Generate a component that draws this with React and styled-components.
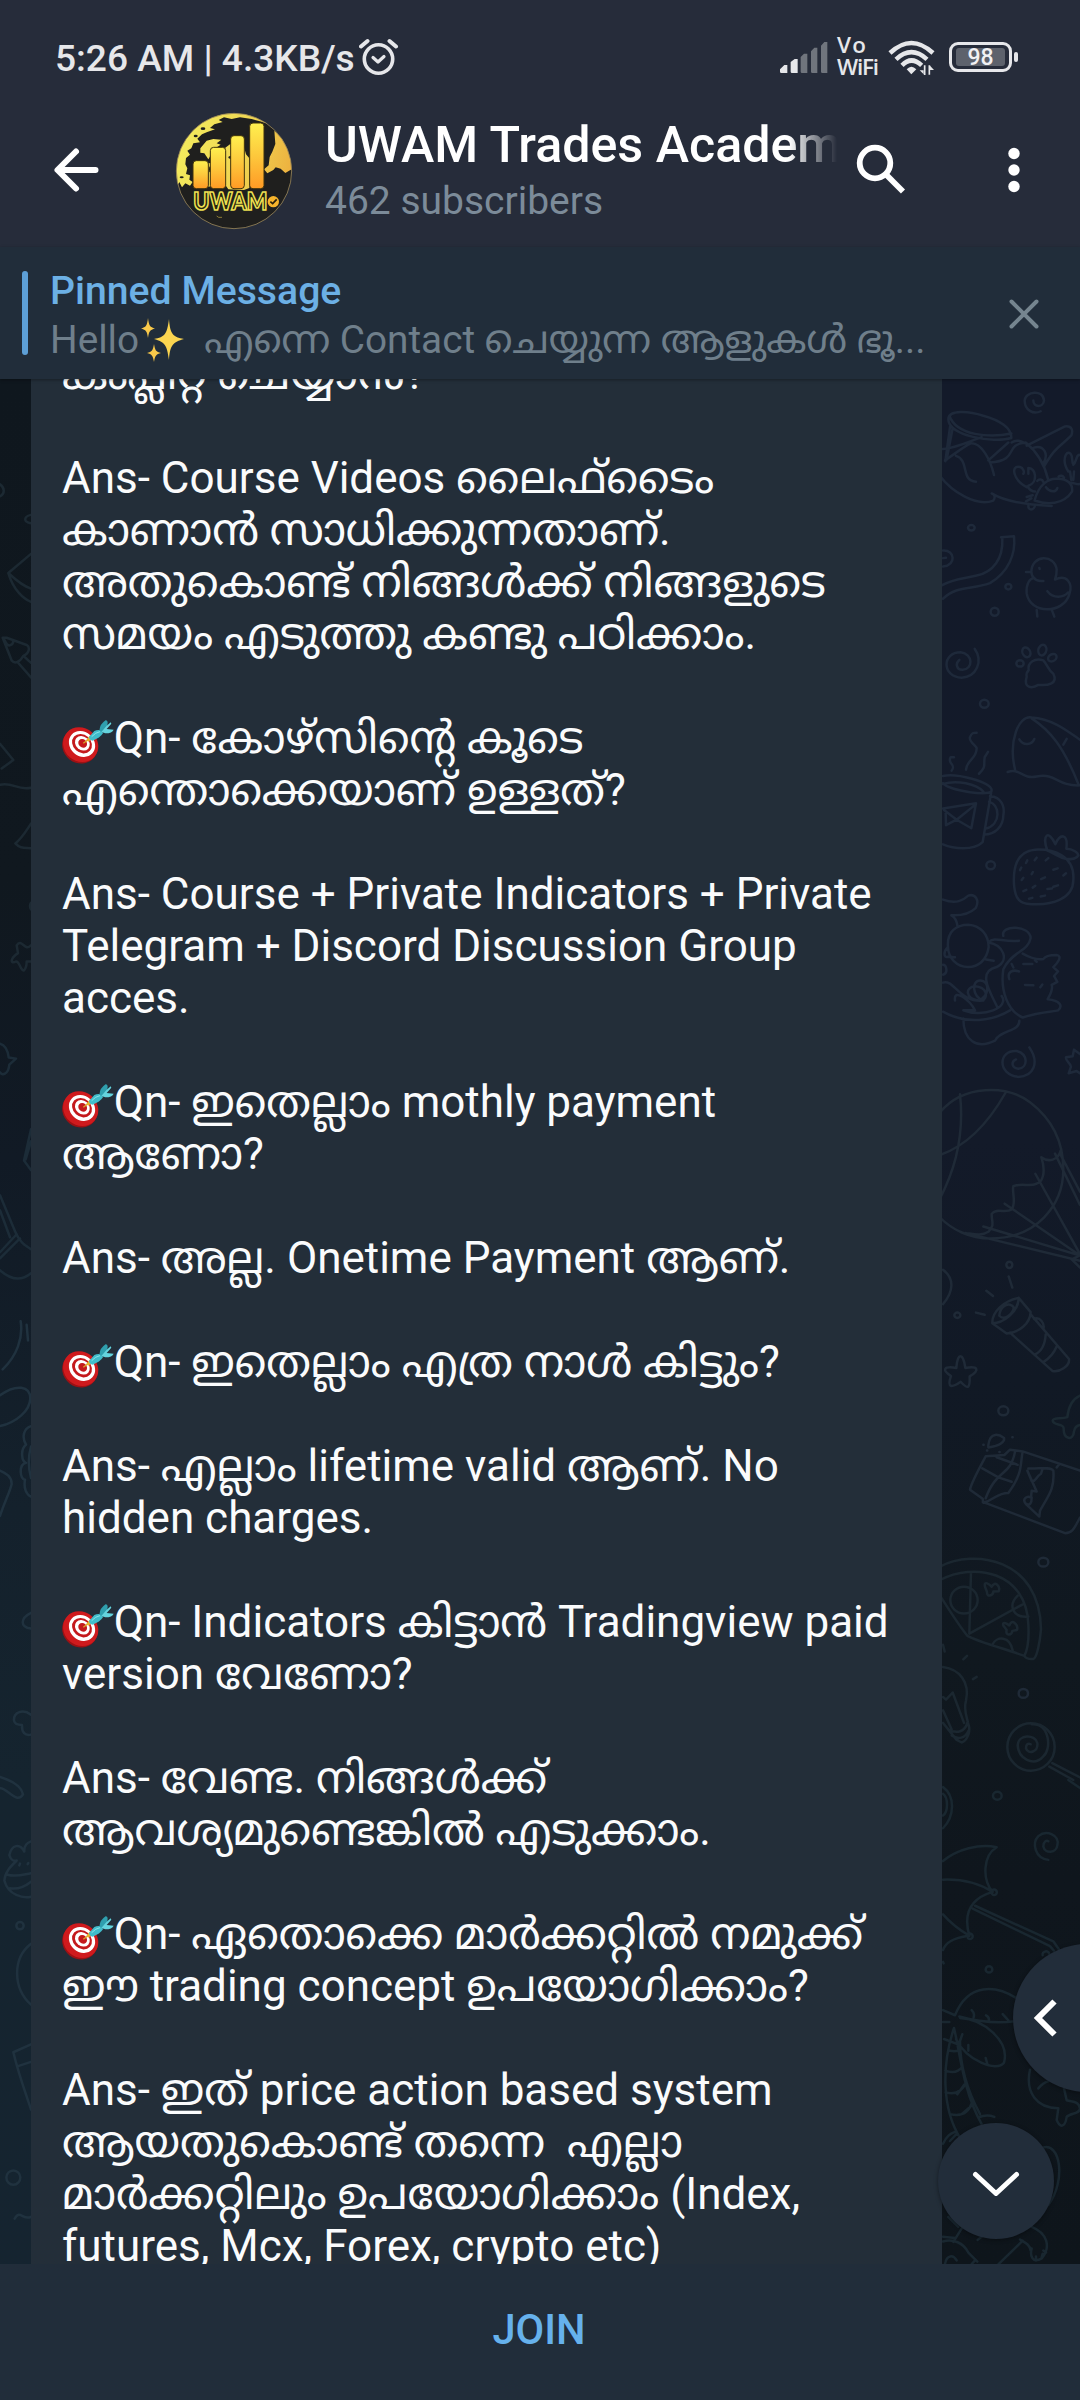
import React from "react";
import styled, { createGlobalStyle } from "styled-components";

const GlobalStyle = createGlobalStyle`
  body {
    margin: 0;
    background: #222d3a;
    font-family: Roboto, "Noto Sans Malayalam", sans-serif;
  }
`;

const Screen = styled.div`
  display: flex;
  flex-direction: column;
  width: 1080px;
  height: 2400px;
  overflow: hidden;
  color: #fff;
`;

const Top = styled.header`
  display: flex;
  flex-direction: column;
  height: 247px;
  background: #262c3a;
`;

const StatusBar = styled.div`
  display: flex;
  align-items: flex-start;
  height: 102px;
  padding: 0 62px 0 55px;
  box-sizing: border-box;
`;

const Clock = styled.span`
  margin-top: 37px;
  width: 304px;
  font-size: 37.1px;
  line-height: 44px;
  font-weight: 500;
  white-space: pre;
  color: #e6e7ea;
`;

const AlarmIcon = styled.svg`
  width: 40px;
  height: 38px;
  margin-top: 38px;
`;

const Spacer = styled.div`
  flex: 1;
`;

const SignalIcon = styled.svg`
  width: 48px;
  height: 31px;
  margin: 42px 9px 0 0;
`;

const Carrier = styled.div`
  display: flex;
  flex-direction: column;
  width: 51px;
  margin-top: 34px;
  font: 600 22.4px/21.5px "Open Sans", sans-serif;
  color: #e6e7ea;
`;

const CarrierLine = styled.span`
  letter-spacing: ${(p) => p.$track}px;
`;

const WifiIcon = styled.svg`
  width: 47px;
  height: 36px;
  margin: 40px 14px 0 0;
`;

const Battery = styled.div`
  display: flex;
  align-items: center;
  margin-top: 42px;
`;

const BatteryShell = styled.div`
  display: flex;
  width: 63px;
  height: 30px;
  box-sizing: border-box;
  padding: 3px 4px;
  border: 3px solid #e6e7ea;
  border-radius: 9px;
`;

const BatteryLevel = styled.div`
  flex: 1;
  border-radius: 3px;
  background: #5d626c;
  font-size: 23px;
  font-weight: 500;
  line-height: 20px;
  text-align: center;
  color: #f1f1f3;
`;

const BatteryTip = styled.div`
  width: 4px;
  height: 10px;
  margin-left: 2px;
  border-radius: 2px;
  background: #e6e7ea;
`;

const TitleBar = styled.div`
  display: flex;
  align-items: center;
  height: 136px;
  padding-left: 53px;
`;

const BackIcon = styled.svg`
  width: 46px;
  height: 46px;
`;

const Avatar = styled.svg`
  width: 118px;
  height: 118px;
  margin: 1px 0 0 76px;
`;

const Titles = styled.div`
  display: flex;
  flex-direction: column;
  width: 513px;
  margin: -3px 0 0 32px;
`;

const ChannelName = styled.div`
  height: 58px;
  overflow: hidden;
  font-size: 50.2px;
  line-height: 58px;
  font-weight: 500;
  white-space: nowrap;
  -webkit-mask-image: linear-gradient(90deg, #000 464px, transparent 512px);
  mask-image: linear-gradient(90deg, #000 464px, transparent 512px);
`;

const Subscribers = styled.div`
  height: 46px;
  margin: 4px 0 -2px;
  font-size: 39px;
  line-height: 46px;
  color: #7c8b99;
`;

const SearchIcon = styled.svg`
  width: 50px;
  height: 52px;
  margin-left: 17px;
`;

const MoreIcon = styled.svg`
  width: 14px;
  height: 48px;
  margin-left: 102px;
`;

const Pinned = styled.section`
  display: flex;
  align-items: flex-start;
  height: 132px;
  padding: 24px 40px 0 22px;
  box-sizing: border-box;
  background: #212d3a;
  box-shadow: 0 1px 3px rgba(0, 0, 0, 0.35);
  z-index: 1;
`;

const PinnedBar = styled.div`
  width: 6px;
  height: 84px;
  border-radius: 3px;
  background: #5d9fd6;
`;

const PinnedBody = styled.div`
  flex: 1;
  margin: -3px 0 0 22px;
`;

const PinnedTitle = styled.div`
  font-size: 39.2px;
  font-weight: 500;
  line-height: 46px;
  color: #6cb0e5;
`;

const PinnedText = styled.div`
  display: flex;
  align-items: center;
  margin-top: 2px;
  height: 48px;
  font-size: 38.75px;
  line-height: 48px;
  white-space: pre;
  color: #6f7f8b;
`;

const SparkleIcon = styled.svg`
  width: 46px;
  height: 44px;
`;

const CloseIcon = styled.svg`
  width: 32px;
  height: 32px;
  margin-top: 27px;
`;

const Chat = styled.main`
  position: relative;
  display: flex;
  height: 1885px;
  overflow: hidden;
  background:
    linear-gradient(180deg, #0f171e 0, #10181f 500px, #111a25 780px, #14212c 1130px, #15242f 1400px, #152430 100%) 0 0 / 31px 100% no-repeat,
    linear-gradient(180deg, #131a2a 0, #131a29 760px, #111925 1000px, #10181f 1280px, #0f161d 1500px, #0e151b 100%);
`;

const Doodles = styled.svg`
  position: absolute;
  inset: 0;
  width: 1080px;
  height: 1885px;
  fill: none;
  stroke-width: 2.5;
  stroke-linecap: round;
  stroke-linejoin: round;

  path,
  ellipse {
    vector-effect: non-scaling-stroke;
  }
`;

const Bubble = styled.article`
  position: relative;
  width: 911px;
  margin-left: 31px;
  padding-left: 31px;
  box-sizing: border-box;
  background: #232e39;
`;

const Lines = styled.div`
  display: flex;
  flex-direction: column;
  margin-top: -31px;
`;

const Line = styled.div`
  height: 52px;
  flex: none;
  font-size: 44px;
  line-height: 52px;
  white-space: pre;
  color: #fafbfc;
`;

const DartIcon = styled.svg`
  display: inline-block;
  width: 53px;
  height: 44.67px;
  margin-right: -1.3px;
  vertical-align: -10.7px;
`;

const RoundButton = styled.button`
  position: absolute;
  display: flex;
  align-items: center;
  left: ${(p) => p.$x}px;
  top: ${(p) => p.$y}px;
  width: ${(p) => p.$size}px;
  height: ${(p) => p.$size}px;
  padding: 0 0 0 ${(p) => p.$inset}px;
  border: 0;
  border-radius: 50%;
  background: #222d3a;
  box-shadow: 0 1px 4px rgba(0, 0, 0, 0.4);
`;

const JoinBar = styled.footer`
  display: flex;
  justify-content: center;
  height: 136px;
  background: #212d3a;
`;

const JoinButton = styled.button`
  height: 48px;
  margin: 42px 2px 0 0;
  padding: 0;
  border: 0;
  background: none;
  font: 500 41.6px/48px Roboto, sans-serif;
  color: #66b1ec;
`;

const Dart = () => (
  <DartIcon viewBox="186 58 159 134">
    <ellipse cx="240" cy="139" rx="55" ry="51" transform="rotate(38 240 139)" fill="#9c1114" />
    <ellipse cx="242" cy="135" rx="55" ry="50" transform="rotate(42 242 135)" fill="#cf1a1d" />
    <ellipse cx="246" cy="133" rx="42" ry="36" transform="rotate(42 246 133)" fill="#fff" />
    <ellipse cx="246" cy="132" rx="32" ry="27" transform="rotate(42 246 132)" fill="#c4191c" />
    <ellipse cx="247" cy="131" rx="24" ry="20" transform="rotate(42 247 131)" fill="#fff" />
    <ellipse cx="248" cy="131" rx="14" ry="12" transform="rotate(42 248 131)" fill="#c4191c" />
    <path d="M250 131 L268 117" stroke="#d9a425" strokeWidth="4" />
    <path d="M259 121 L270 107 L279 115 L265 126Z" fill="#e8b32d" />
    <path d="M267 112 L283 94 Q292 90 303 92 L309 101 Q300 115 278 123 Q268 122 267 112Z" fill="#41bccb" />
    <path d="M298 93 Q299 73 318 61 L323 66 L322 81 L308 98Z" fill="#2f9fae" />
    <path d="M304 97 Q318 79 332 68 L334 72 L320 88 L341 90 Q337 101 316 101Z" fill="#64d3dd" />
    <path d="M275 111 Q287 98 300 96" stroke="#8be6ea" strokeWidth="3" fill="none" />
  </DartIcon>
);

const Sparkles = () => (
  <SparkleIcon viewBox="0 0 46 44">
    <path d="M30 1 C31 16 34 19 45 21 C34 24 31 27 30 42 C28 27 26 24 15 21 C26 19 28 16 30 1Z" fill="#fbd550" />
    <path d="M9 0 C10 8 11 9 16 10.500 C11 12 10 13 9 20 C8 13 7 12 2 10.500 C7 9 8 8 9 0Z" fill="#f9c94a" />
    <path d="M15 26 C16 32 17 34 22 35 C17 36 16 38 15 44 C14 38 13 36 8 35 C13 34 14 32 15 26Z" fill="#f9c94a" />
  </SparkleIcon>
);

const Logo = () => (
  <Avatar viewBox="45 36 354 354">
    <defs>
      <linearGradient id="bar" x1="0" y1="0" x2="0" y2="1">
        <stop offset="0" stopColor="#fff04f" />
        <stop offset="0.5" stopColor="#fdc83c" />
        <stop offset="1" stopColor="#ff9a25" />
      </linearGradient>
      <linearGradient id="land" gradientUnits="userSpaceOnUse" x1="48" y1="100" x2="396" y2="200">
        <stop offset="0" stopColor="#f3ec5e" />
        <stop offset="0.6" stopColor="#efd552" />
        <stop offset="1" stopColor="#edb13f" />
      </linearGradient>
      <clipPath id="disc">
        <circle cx="222" cy="213" r="173" />
      </clipPath>
    </defs>
    <circle cx="222" cy="213" r="173" fill="#1f1f1e" />
    <g clipPath="url(#disc)" fill="url(#land)">
      <path d="M46 270 L40 170 L120 60 L200 36 L290 45 L325 72 L300 64 L275 57 L240 52 L215 57 L192 52 L176 60 L188 66 L163 73 L150 84 L165 88 L140 97 L126 103 L112 116 L120 127 L100 130 L94 145 L82 152 L90 164 L78 174 L76 193 L82 205 L78 222 L90 226 L88 239 L98 246 L90 257 L76 250 L66 262 L58 246Z" />
      <path d="M121 145 L140 122 L160 117 L184 119 L170 130 L182 134 L166 145 L178 152 L154 163 L145 178 L133 160 L121 158Z" />
      <path d="M196 143 L211 132 L250 134 L258 163 L268 175 L268 264 L252 270 L205 268 L194 252 L145 260 L145 190 L194 185Z" />
      <path d="M343 92 L380 130 L404 200 L395 208 L376 219 L362 206 L347 202 L340 210 L322 220 L312 208 L326 196 L329 171 L337 155 L346 132Z" />
    </g>
    <g fill="#1f1f1e">
      <ellipse cx="129" cy="86" rx="7" ry="4" />
      <ellipse cx="107" cy="108" rx="6" ry="4" />
      <ellipse cx="215" cy="172" rx="10" ry="5" />
      <ellipse cx="150" cy="208" rx="3" ry="9" />
      <ellipse cx="65" cy="232" rx="6" ry="3" />
    </g>
    <g fill="url(#bar)" stroke="#40330c" strokeWidth="3">
      <rect x="99" y="182" width="46" height="84" rx="10" />
      <rect x="151" y="142" width="46" height="124" rx="10" />
      <rect x="212" y="107" width="41" height="159" rx="10" />
      <rect x="269" y="69" width="43" height="197" rx="10" />
    </g>
    <path d="M170 348 L176 352 L186 352" stroke="#c3a844" strokeWidth="2" fill="none" />
    <text x="100" y="331" textLength="222" lengthAdjust="spacingAndGlyphs" fontFamily="Lato, sans-serif" fontWeight="900" fontSize="74" fill="#25240f" stroke="#eee052" strokeWidth="5">UWAM</text>
    <circle cx="340" cy="305" r="17" fill="#f8b52c" />
    <path d="M331 305 L338 311 L350 298" stroke="#2b210b" strokeWidth="5" fill="none" />
    <circle cx="222" cy="213" r="173" fill="none" stroke="#97855a" strokeWidth="2.500" />
  </Avatar>
);

const Wallpaper = () => (
  <Doodles viewBox="0 379 1080 1885">
    <g transform="translate(940 380) scale(0.33333 0.44643)" stroke="#1e293a">
      <path d="M302 70 C280 78 254 68 254 46 C256 25 310 20 312 46 C310 62 280 62 280 46" />
      <path d="M25 88 C25 65 90 70 130 80 C180 90 215 108 214 130 C160 142 25 125 25 88Z M28 80 C50 125 150 130 214 120 M30 105 L16 182 M38 108 L20 178 M0 215 C35 250 110 285 160 270 C168 262 162 255 155 254 C200 275 270 280 335 282" />
      <path d="M0 155 C40 155 80 140 125 128 M15 180 C45 165 70 150 92 142 C125 140 152 180 162 213 M48 170 C90 180 60 225 108 228 M145 180 L205 140 M150 185 C240 180 190 145 257 140 C290 160 312 185 324 222 M215 140 C230 132 245 138 257 142 M260 147 L375 104 C395 102 400 112 394 124 C360 150 345 150 312 194 M280 152 C310 144 328 165 310 187" />
      <path d="M260 240 C220 225 210 190 240 195 C250 197 254 207 250 210 M265 237 C295 230 288 196 265 197 L265 210 M262 238 C268 245 275 250 285 250 M284 270 C295 235 325 220 350 221 C380 220 400 232 396 250 C370 280 320 280 284 270Z M260 262 L278 258 M258 272 L274 265 M266 278 C260 295 285 292 285 280 M318 240 C330 252 348 252 352 242 M292 226 a10 7 0 0 1 18 2 M356 216 a10 7 0 0 1 16 3 M390 230 C405 230 410 235 420 233 M385 205 C360 175 385 150 395 170 L398 186 M400 190 C410 185 408 165 420 168 M390 205 L394 224 M402 205 L400 224" />
      <ellipse cx="94" cy="331" rx="10" ry="6" />
      <ellipse cx="205" cy="463" rx="9" ry="6" />
      <ellipse cx="164" cy="519" rx="12" ry="9" />
      <ellipse cx="133" cy="725" rx="13" ry="9" />
      <ellipse cx="152" cy="1087" rx="13" ry="9" />
      <path d="M183 352 L222 350 C228 390 205 430 150 455 C95 470 50 460 9 490 M187 355 C190 400 160 430 110 438 C70 445 40 445 5 460 M9 382 C45 380 50 415 9 418 M9 399 L18 398" />
      <path d="M258 430 L274 430 C275 390 345 390 350 425 C350 440 345 445 345 447 C380 435 400 455 388 480 C370 525 270 525 260 478 C258 455 270 445 282 443 C290 452 300 450 310 450 M282 443 Q275 440 274 430 M322 473 C340 490 370 488 384 476 M290 515 L292 530 M336 516 L343 530 M298 421 L299 423" />
      <path d="M104 602 C130 630 110 665 65 667 C5 665 5 610 62 610 C100 613 100 648 68 649 C50 650 45 635 58 627" />
      <path d="M260 665 C250 690 275 692 295 683 C325 685 355 680 340 658 C325 650 322 638 310 628 C285 622 262 632 266 650 Q258 655 260 665Z" />
      <ellipse cx="240" cy="635" rx="11" ry="7" />
      <ellipse cx="259" cy="610" rx="13" ry="10" transform="rotate(30 259 610)" />
      <ellipse cx="307" cy="605" rx="13" ry="11" transform="rotate(-40 307 605)" />
      <ellipse cx="337" cy="622" rx="13" ry="8" transform="rotate(-15 337 622)" />
      <path d="M203 878 C240 868 245 895 290 888 C350 880 350 910 420 908 M225 872 C205 810 235 750 275 756 C340 760 380 785 420 806 M275 758 C330 785 370 820 415 905 M238 805 C250 820 275 818 283 804 M370 817 L380 804" />
      <path d="M35 875 C50 860 20 860 32 845 L42 845 M78 873 C80 850 110 850 110 825 C110 820 85 810 90 800 C95 790 100 790 110 790 M117 882 C140 865 130 865 134 845 L144 833" />
      <path d="M9 887 C50 880 150 900 155 918 C160 935 25 920 9 903 M9 905 C50 895 110 905 130 922 M155 918 L128 1035 C100 1055 40 1050 9 1040 M150 932 C185 935 195 955 190 975 C190 1000 165 1018 133 1018 M147 945 C180 950 185 995 137 1005 M9 960 L108 948 L94 1004 L50 985 L18 997 L17 970 M12 963 L50 985 L108 950" />
      <path d="M222 1130 C218 1080 240 1055 285 1052 C340 1050 405 1065 400 1120 C400 1160 340 1180 260 1173 C230 1170 224 1150 222 1130Z M322 1054 C305 1020 325 1005 346 1040 C360 1015 385 1015 379 1050 C400 1050 415 1060 415 1065 C405 1075 390 1075 365 1070 C345 1062 335 1058 322 1054" />
      <path d="M240 1098 l4 -6 M258 1082 l4 -6 M284 1076 l6 -6 M317 1076 l8 -5 M340 1097 l13 -3 M370 1110 l8 -5 M245 1120 l5 -5 M275 1107 l4 -5 M303 1118 l12 -4 M340 1135 l14 -3 M250 1145 l9 -3 M278 1137 l8 -4 M267 1162 l10 -2 M302 1157 l13 -2 M322 1140 l14 -1" />
      <path d="M9 1164 C50 1175 70 1165 85 1155 C105 1150 120 1165 107 1183 C90 1195 60 1200 34 1199 Q50 1205 53 1225 M24 1270 C20 1235 50 1220 85 1220 C120 1222 145 1240 146 1270 C140 1300 115 1315 84 1315 C50 1315 25 1295 24 1270Z M24 1270 C10 1280 10 1295 24 1292 L45 1293 M145 1260 C165 1245 185 1260 237 1256 M138 1298 L161 1301 M9 1310 C20 1310 25 1330 9 1332 M190 1245 C180 1220 270 1220 272 1250 C265 1280 215 1280 190 1320 C180 1370 205 1415 248 1428 C300 1415 340 1415 354 1412 C370 1402 360 1390 323 1387 Q340 1365 335 1355 L352 1348 L342 1335 L354 1325 L340 1315 C350 1308 370 1290 350 1288 C330 1288 315 1290 310 1297 C290 1300 260 1290 248 1285" />
      <path d="M145 1260 C190 1265 210 1300 170 1315 C110 1325 150 1370 172 1405 M9 1350 C40 1340 60 1395 128 1390 C145 1380 140 1360 105 1358 C75 1360 75 1385 115 1390 C150 1380 150 1345 120 1345 C95 1345 95 1380 130 1390 M9 1415 C80 1445 160 1435 210 1412 M45 1390 C40 1360 90 1390 105 1412 L70 1412 C130 1430 210 1405 185 1380 M70 1430 C70 1480 110 1500 165 1480 C180 1455 240 1460 238 1435 M208 1342 C200 1325 220 1320 237 1325 M215 1308 L220 1316 M250 1308 L277 1308 M285 1300 L290 1303 M255 1355 L280 1356 M301 1360 L307 1354" />
      <path d="M268 1495 C300 1530 280 1560 235 1561 C170 1555 175 1500 230 1503 C265 1510 265 1540 235 1543 C215 1540 212 1528 228 1522 M420 1510 L402 1500 L398 1515 L378 1517 C375 1525 392 1530 393 1538 L386 1553 L410 1548 L425 1555" />
    </g>
    <g transform="translate(940 1080) scale(0.33333 0.44643)" stroke="#1f2a37">
      <path d="M0 72 C70 10 200 10 270 50 C340 90 370 140 370 200 C370 280 290 355 150 355 C90 355 35 335 0 308 M0 168 C90 145 150 90 197 28 M60 32 C70 100 60 180 0 265 M304 173 C320 210 305 230 290 232 C270 240 245 230 220 238 C215 250 230 275 215 290 C195 300 170 285 155 300 C155 320 165 325 145 340 C125 350 100 345 78 343 M304 173 C325 185 355 180 362 158 M78 343 L420 405 M130 328 L420 393 M194 277 L420 393 M286 210 L420 390 M345 165 L420 280 M360 165 L420 250 M395 402 L420 393 M395 402 L420 420" />
      <ellipse cx="208" cy="414" rx="9" ry="7" />
      <ellipse cx="52" cy="527" rx="9" ry="6" />
      <ellipse cx="190" cy="741" rx="15" ry="10" />
      <ellipse cx="310" cy="1080" rx="15" ry="10" />
      <ellipse cx="250" cy="1374" rx="14" ry="10" />
      <path d="M9 425 C45 445 40 475 9 502 M206 440 L217 465 M139 472 L159 484 M108 521 L134 526 M157 545 L200 568 C240 565 270 545 272 520 L236 488 C190 495 155 520 157 545Z M178 528 C180 505 210 495 222 510 C215 530 190 538 178 528 M157 545 C190 545 235 520 236 488 M272 525 L387 625 C390 640 360 655 338 652 L210 566 M282 535 C300 530 315 545 310 558 M317 570 C315 595 300 610 283 615 M350 597 C340 615 325 625 310 632" />
      <path d="M49 645 C52 610 70 610 76 645 C115 640 120 650 89 664 C90 690 85 695 62 676 C35 690 20 690 33 663 C5 650 10 640 49 645Z" />
      <path d="M420 707 C395 715 385 735 382 755 C365 760 340 755 338 763 C340 775 370 768 371 780 C370 805 400 810 402 787 Q405 775 420 773" stroke="#1b2932" />
      <path d="M145 818 C150 785 180 795 192 802 C195 810 180 820 145 823Z M130 817 l1 0 M217 800 l1 0 M141 830 l1 0 M178 833 l1 0 M137 843 L193 840 L210 828 L248 832 C240 860 250 880 205 925 C170 925 165 940 130 947 L128 938 L90 918 Q92 905 137 843Z M127 870 L175 890 L215 900 M170 845 L233 862 M137 937 C170 870 210 890 225 833 M248 832 L420 875 M128 945 L375 1015 C400 1015 405 1000 420 980 M265 870 C290 872 330 865 340 875 C345 920 320 935 300 965 L298 978 L265 955 C240 940 260 930 273 935 L275 920 L290 922 L262 875 L275 898 C290 900 285 890 303 882 L308 870 M350 868 L358 860 M260 950 Q275 955 275 935" />
      <g stroke="#1b2730">
        <path d="M0 1090 C100 1050 300 1070 303 1230 C300 1260 290 1295 280 1297 C265 1298 258 1296 253 1290 C200 1275 120 1260 82 1245 C55 1220 30 1190 0 1155 M0 1120 C100 1080 260 1100 265 1220 C268 1260 260 1280 253 1290 M93 1102 L88 1240 M88 1240 L247 1175" />
        <ellipse cx="72" cy="1165" rx="41" ry="30" />
        <path d="M135 1135 C130 1120 150 1130 155 1135 C165 1120 182 1135 176 1145 L160 1146 C160 1155 140 1160 141 1147Z M190 1222 C185 1210 205 1220 208 1222 C215 1205 236 1220 231 1232 L217 1234 C215 1245 195 1245 200 1232Z M233 1155 C205 1175 215 1205 265 1202 M157 1265 C170 1245 210 1245 218 1278 M9 1265 L14 1280 M70 1298 L81 1290 M99 1342 L110 1337" />
        <path d="M9 1315 C60 1320 90 1350 78 1390 C70 1410 80 1425 84 1440 C95 1460 80 1480 65 1484 L50 1478 C35 1465 15 1445 9 1440 M25 1455 C50 1465 75 1460 82 1440 M35 1468 C55 1478 75 1475 85 1458 M9 1382 L18 1388 L38 1372 L72 1440 M9 1412 L35 1455" />
        <ellipse cx="273" cy="1494" rx="71" ry="53" />
        <path d="M337 1530 L420 1562 M328 1538 L400 1568 M275 1443 C330 1440 335 1500 310 1515 C280 1540 235 1520 233 1490 C235 1465 285 1465 292 1485 C295 1505 265 1512 258 1497 C258 1487 265 1485 272 1488" />
      </g>
    </g>
    <g transform="translate(900 1780) scale(0.33333 0.39541)" stroke="#192730">
      <path d="M129 18 C165 40 165 90 129 122 M129 35 C145 45 145 80 129 90 M505 0 L540 20" />
      <ellipse cx="292" cy="40" rx="13" ry="10" />
      <ellipse cx="267" cy="479" rx="10" ry="8" />
      <path d="M445 202 C405 198 395 160 415 142 C440 125 480 140 472 165 C470 185 435 188 430 168 C430 155 440 152 445 155" />
      <path d="M129 205 C170 175 240 160 290 170 C250 190 245 250 278 283 C210 300 190 340 208 394 C150 400 135 415 129 430 M129 252 C190 250 235 260 278 283 M129 340 C160 370 190 385 208 394 M276 280 a8 7 0 1 1 0 8 M202 395 a8 7 0 1 1 2 5 M225 318 L460 408 L478 430 M218 325 L450 420 L462 432 M428 443 a10 8 0 0 1 20 -3 M129 460 l2 4" />
      <path d="M129 582 L165 595 C205 510 290 520 350 552 M178 598 C250 615 300 615 345 610 M215 582 Q225 590 221 600 M258 595 Q270 600 266 612 M308 592 L325 608 M180 602 C250 605 330 660 312 715 C290 740 200 710 168 655 M205 670 L205 685 M257 703 L262 718 M187 643 L180 660 M132 655 L178 670 M129 612 L148 612 M162 627 C125 720 125 830 180 905 M162 627 C180 690 190 790 245 870 M180 660 C180 730 205 790 240 845 M150 685 Q175 688 182 680 M136 735 Q170 745 187 725 M137 790 Q180 800 198 765 M150 845 Q200 855 215 818 M172 795 L193 770 M185 845 L217 822 M236 853 Q260 845 283 852 M129 920 C140 900 150 895 165 890 M150 913 L170 895" />
      <path d="M390 733 C375 790 410 830 475 830 L470 860 C480 880 495 880 500 852 C510 842 540 845 540 830 C535 810 515 815 500 810 L492 780 M415 780 Q430 765 445 762 M428 930 C480 915 500 1010 445 1075 M395 1130 C440 1145 455 1180 425 1210 C395 1225 390 1200 395 1185 M368 1165 L295 1225 M360 1162 C375 1170 390 1175 392 1190 M408 1215 L408 1205 M425 1207 L428 1198 M438 1195 L430 1190 M129 1155 L165 1158 M129 1167 C160 1160 190 1170 205 1195 L232 1218 M145 1105 L175 1130 M188 1130 L160 1168 M215 1224 L225 1215 M233 1163 L245 1155 M135 1224 C140 1200 160 1200 170 1215" />
    </g>
    <g transform="translate(0 380) scale(0.33333 0.59949)" stroke="#1c2932">
      <path d="M0 174 C15 180 15 190 0 194 M93 225 C70 228 70 237 93 239 M93 290 L25 322 C40 350 70 365 93 370 M25 322 C50 335 75 345 93 348 M8 430 L35 468 C45 475 60 470 70 460 C90 455 90 445 80 442 L20 430Z M14 434 C25 450 40 440 40 435 M70 460 L93 472 M55 472 L93 496 M0 607 L40 634 L5 648 M0 675 C40 670 50 685 93 680 M93 740 C75 755 65 765 46 773 C60 782 75 780 93 781 M93 872 Q87 877 93 883 M93 943 C75 955 65 930 50 943 L54 956 C30 965 30 975 48 970 C60 970 60 985 72 985 Q80 980 80 970 L93 970" />
      <path d="M0 1107 C20 1110 25 1125 26 1130 L48 1132 L28 1142 C25 1160 5 1160 0 1155 M93 1250 L72 1302 L93 1318 M77 1300 L93 1270 M0 1360 L45 1420 C60 1440 80 1445 93 1450 M0 1385 L30 1430 M0 1455 L50 1425 M0 1465 L60 1432 M0 1485 C30 1500 60 1505 93 1490" stroke="#1c2c38" />
    </g>
    <g transform="translate(0 1320) scale(0.33333 0.60268)" stroke="#20323f">
      <path d="M62 2 C70 30 50 60 8 82 M80 8 L84 34 M0 125 C50 105 90 110 91 130 C90 150 50 170 0 176 M93 176 C70 180 65 195 78 207 C60 215 65 235 78 237 C55 240 60 265 75 265 C70 280 80 290 93 293 M93 210 Q80 235 93 262 M0 250 C20 255 35 260 35 272 C30 285 15 300 0 325 M93 486 C60 495 60 510 93 512 M93 655 C70 645 40 650 42 665 C45 672 60 672 66 672 C65 685 75 690 93 688 M0 758 C40 765 65 775 69 787 C50 805 20 775 0 777" />
      <path d="M93 865 C78 868 72 875 73 882 C60 868 35 870 28 888 C35 900 45 897 50 897 C35 905 15 915 13 930 C25 955 70 960 93 957 M20 920 C50 925 70 920 93 918 M30 943 C55 945 75 940 93 932 M58 905 l2 -3 M83 903 l2 -2 M93 1035 C35 1060 40 1110 93 1136 M93 1202 L40 1215 C55 1250 75 1280 93 1310 M54 1238 L93 1231 M44 1491 C60 1475 70 1495 93 1488" />
      <ellipse cx="60" cy="1005" rx="11" ry="6" />
      <ellipse cx="40" cy="1423" rx="21" ry="12" />
    </g>
  </Doodles>
);

const messageLines = [
  { text: "കംപ്ലീറ്റ് ചെയ്യാൻ?" },
  {},
  { text: "Ans- Course Videos ലൈഫ്\u200cടൈം" },
  { text: "കാണാൻ സാധിക്കുന്നതാണ്." },
  { text: "അതുകൊണ്ട് നിങ്ങൾക്ക് നിങ്ങളുടെ" },
  { text: "സമയം എടുത്തു കണ്ടു പഠിക്കാം." },
  {},
  { dart: true, text: "Qn- കോഴ്\u200cസിന്റെ കൂടെ" },
  { text: "എന്തൊക്കെയാണ് ഉള്ളത്?" },
  {},
  { text: "Ans- Course + Private Indicators + Private" },
  { text: "Telegram + Discord Discussion Group" },
  { text: "acces." },
  {},
  { dart: true, text: "Qn- ഇതെല്ലാം mothly payment" },
  { text: "ആണോ?" },
  {},
  { text: "Ans- അല്ല. Onetime Payment ആണ്." },
  {},
  { dart: true, text: "Qn- ഇതെല്ലാം എത്ര നാൾ കിട്ടും?" },
  {},
  { text: "Ans- എല്ലാം lifetime valid ആണ്. No" },
  { text: "hidden charges." },
  {},
  { dart: true, text: "Qn- Indicators കിട്ടാൻ Tradingview paid" },
  { text: "version വേണോ?" },
  {},
  { text: "Ans- വേണ്ട. നിങ്ങൾക്ക്" },
  { text: "ആവശ്യമുണ്ടെങ്കിൽ എടുക്കാം." },
  {},
  { dart: true, text: "Qn- ഏതൊക്കെ മാർക്കറ്റിൽ നമുക്ക്" },
  { text: "ഈ trading concept ഉപയോഗിക്കാം?" },
  {},
  { text: "Ans- ഇത് price action based system" },
  { text: "ആയതുകൊണ്ട് തന്നെ  എല്ലാ" },
  { text: "മാർക്കറ്റിലും ഉപയോഗിക്കാം (Index," },
  { text: "futures, Mcx, Forex, crypto etc)" },
];

export default function App() {
  return (
    <Screen>
      <GlobalStyle />
      <Top>
        <StatusBar>
          <Clock>5:26 AM | 4.3KB/s</Clock>
          <AlarmIcon viewBox="0 0 40 38" fill="none" stroke="#e6e7ea" strokeWidth="3.6" strokeLinecap="round" strokeLinejoin="round">
            <circle cx="19.500" cy="21" r="14.200" />
            <path d="M14 19.500 L19 24 L25 18.500" strokeWidth="3.2" />
            <path d="M2 8.500 L8.500 3 M30.500 3 L37 8.500" strokeWidth="4" />
          </AlarmIcon>
          <Spacer />
          <SignalIcon viewBox="118 66 144 93">
            <path d="M118 148 L131 135 H140 V159 H122 Q118 159 118 155Z M150 126 L162 117 H171 V159 H154 Q150 159 150 155Z" fill="#e6e7ea" />
            <path d="M180 111 L190 101 H200 V159 H184 Q180 159 180 155Z M211 94 L221 83 H230 V159 H215 Q211 159 211 155Z M241 77 L251 66 H260 V159 H245 Q241 159 241 155Z" fill="#70757d" />
          </SignalIcon>
          <Carrier>
            <CarrierLine $track={1.2}>Vo</CarrierLine>
            <CarrierLine $track={-1.2}>WiFi</CarrierLine>
          </Carrier>
          <WifiIcon viewBox="442 60 141 108" fill="none" stroke="#e6e7ea" strokeWidth="13.500">
            <path d="M448 99 Q512 39 577 99" />
            <path d="M466 118 Q512 75 559 118" />
            <path d="M484 136 Q512 107 543 136" />
            <path d="M498 148 Q512 133 527 148 L512 163Z" fill="#e6e7ea" stroke="none" />
            <path d="M552 136 V165 M566 164 V136" strokeWidth="5" />
            <path d="M537 151 H549 V163Z M580 150 H568 V137Z" fill="#e6e7ea" stroke="none" />
          </WifiIcon>
          <Battery>
            <BatteryShell>
              <BatteryLevel>98</BatteryLevel>
            </BatteryShell>
            <BatteryTip />
          </Battery>
        </StatusBar>
        <TitleBar>
          <BackIcon viewBox="53 147 46 46" fill="none" stroke="#fff" strokeWidth="6" strokeLinecap="round" strokeLinejoin="round">
            <path d="M76 151.500 L57.500 170 L76 188.500 M58 170 H95.500" />
          </BackIcon>
          <Logo />
          <Titles>
            <ChannelName>UWAM Trades Academy</ChannelName>
            <Subscribers>462 subscribers</Subscribers>
          </Titles>
          <SearchIcon viewBox="855 144 50 52" fill="none" stroke="#fff" strokeWidth="5.800">
            <circle cx="875" cy="163" r="15.300" />
            <path d="M886.500 175 L903 191.500" />
          </SearchIcon>
          <MoreIcon viewBox="1007 146 14 48" fill="#fff">
            <circle cx="1014" cy="153.500" r="5.700" />
            <circle cx="1014" cy="170" r="5.700" />
            <circle cx="1014" cy="186.500" r="5.700" />
          </MoreIcon>
        </TitleBar>
      </Top>
      <Pinned>
        <PinnedBar />
        <PinnedBody>
          <PinnedTitle>Pinned Message</PinnedTitle>
          <PinnedText>
            <span>Hello</span>
            <Sparkles />
            <span>{"  എന്നെ Contact ചെയ്യുന്ന ആളുകൾ ഭൂ..."}</span>
          </PinnedText>
        </PinnedBody>
        <CloseIcon viewBox="0 0 32 32" stroke="#75858f" strokeWidth="4" strokeLinecap="round">
          <path d="M3.500 3.500 L28.500 28.500 M28.500 3.500 L3.500 28.500" />
        </CloseIcon>
      </Pinned>
      <Chat>
        <Wallpaper />
        <Bubble>
          <Lines>
            {messageLines.map((line, i) => (
              <Line key={i}>
                {line.dart && <Dart />}
                {line.text}
              </Line>
            ))}
          </Lines>
        </Bubble>
        <RoundButton $x={1013} $y={1565} $size={148} $inset={20} aria-label="Open side panel">
          <svg width="26" height="40" viewBox="0 0 26 40" fill="none" stroke="#fff" strokeWidth="6">
            <path d="M21.500 3.500 L5 20 L21.500 36.500" />
          </svg>
        </RoundButton>
        <RoundButton $x={938} $y={1744} $size={116} $inset={34} aria-label="Scroll to bottom">
          <svg width="48" height="30" viewBox="0 0 48 30" fill="none" stroke="#fff" strokeWidth="5" strokeLinecap="round" strokeLinejoin="round">
            <path d="M3.500 8.500 L24 27.500 L44.500 8.500" />
          </svg>
        </RoundButton>
      </Chat>
      <JoinBar>
        <JoinButton>JOIN</JoinButton>
      </JoinBar>
    </Screen>
  );
}
